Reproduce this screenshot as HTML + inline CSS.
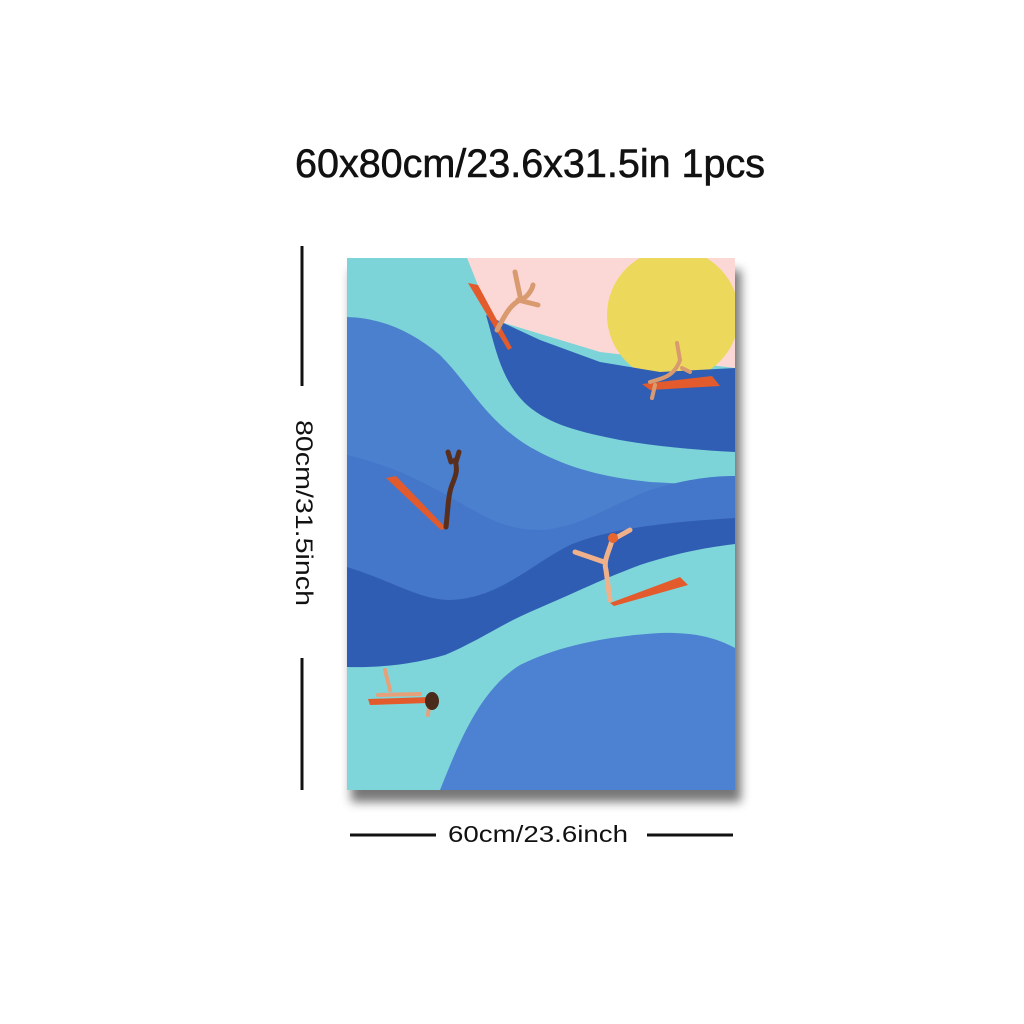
<!DOCTYPE html>
<html><head><meta charset="utf-8"><style>
html,body{margin:0;padding:0;background:#fff;width:1024px;height:1024px;overflow:hidden}
</style></head><body>
<svg width="1024" height="1024" viewBox="0 0 1024 1024" xmlns="http://www.w3.org/2000/svg">
<defs>
<filter id="sh" x="-10%" y="-10%" width="130%" height="130%"><feGaussianBlur stdDeviation="5"/></filter>
<clipPath id="cp"><rect x="347" y="258" width="388" height="532"/></clipPath>
</defs>
<text x="295" y="177" font-family="Liberation Sans, sans-serif" font-size="40" fill="#111" stroke="#111" stroke-width="0.6" textLength="470" lengthAdjust="spacingAndGlyphs">60x80cm/23.6x31.5in 1pcs</text>
<rect x="351" y="270" width="390" height="532" fill="#555" filter="url(#sh)" opacity="0.8"/>
<g clip-path="url(#cp)">
<rect x="347" y="258" width="388" height="532" fill="#7cd3d8"/>
<path d="M467 258 C478 285 484 300 488 318 L600 352 L735 368 L735 258 Z" fill="#fbd8d6"/>
<circle cx="673" cy="315" r="66" fill="#ecd85a"/>
<path d="M486 315 C495 345 500 380 527 405 C550 425 580 432 620 440 C660 447 700 450 735 452 L735 368 L660 372 L600 362 L540 340 Z" fill="#2f5eb4"/>
<path d="M347 317 C380 318 410 330 440 355 C470 385 485 420 530 447 C570 470 610 478 650 482 C690 484 715 486 735 488 L735 790 L347 790 Z" fill="#4b80cf"/>
<path d="M347 455 C390 465 420 480 450 497 C485 517 505 530 540 530 C580 528 610 505 650 490 C690 478 715 476 735 476 L735 790 L347 790 Z" fill="#4477c9"/>
<path d="M347 567 C390 580 420 600 450 600 C500 598 530 565 570 545 C610 528 670 522 735 518 L735 790 L347 790 Z" fill="#2f5db3"/>
<path d="M347 667 C390 668 420 662 445 655 C480 640 500 625 530 612 C570 595 600 580 640 565 C680 552 710 547 735 544 L735 790 L347 790 Z" fill="#7fd6da"/>
<path d="M440 790 C460 740 480 690 520 665 C560 645 610 636 660 633 C700 632 720 640 735 648 L735 790 Z" fill="#4c82d1"/>
<path d="M468 283 L478 285 L512 348 L508 350 Z" fill="#e35a2c"/>
<path d="M497 330 C505 315 510 305 520 300 C527 298 532 290 533 285 M518 300 L538 305 M520 296 L515 272" stroke="#d99a70" stroke-width="5" fill="none" stroke-linecap="round"/>
<path d="M642 384 L712 376 L720 386 L650 390 Z" fill="#e35a2c"/>
<path d="M650 382 C665 378 675 375 680 360 M680 360 L677 343 M682 368 L690 372 M655 385 L652 398" stroke="#d99a70" stroke-width="4" fill="none" stroke-linecap="round"/>
<path d="M386 478 L396 476 L446 528 L441 530 Z" fill="#e35a2c"/>
<path d="M446 527 C448 510 448 495 452 485 C456 475 458 470 455 460 M451 462 L448 452 M456 462 L459 452" stroke="#5a2e1c" stroke-width="5" fill="none" stroke-linecap="round"/>
<path d="M610 603 L680 577 L688 585 L614 606 Z" fill="#e35a2c"/>
<path d="M610 600 L606 570 C603 560 610 550 612 540 M604 562 L575 552 M612 540 L630 530" stroke="#f0b08a" stroke-width="5" fill="none" stroke-linecap="round"/>
<circle cx="613" cy="538" r="5" fill="#e8652e"/>
<path d="M368 699 L430 697 L428 703 L370 705 Z" fill="#e35a2c"/>
<path d="M378 695 L420 694 M390 690 L385 670 M430 697 L428 715" stroke="#e6a07a" stroke-width="4" fill="none" stroke-linecap="round"/>
<ellipse cx="432" cy="701" rx="7" ry="9" fill="#4a2a1a"/>
</g>
<line x1="302" y1="246" x2="302" y2="386" stroke="#111" stroke-width="3"/>
<line x1="302" y1="658" x2="302" y2="790" stroke="#111" stroke-width="3"/>
<text transform="translate(296,420) rotate(90)" font-family="Liberation Sans, sans-serif" font-size="24" fill="#111" textLength="186" lengthAdjust="spacingAndGlyphs">80cm/31.5inch</text>
<line x1="350" y1="835" x2="436" y2="835" stroke="#111" stroke-width="3"/>
<line x1="647" y1="835" x2="733" y2="835" stroke="#111" stroke-width="3"/>
<text x="448" y="842" font-family="Liberation Sans, sans-serif" font-size="23" fill="#111" textLength="180" lengthAdjust="spacingAndGlyphs">60cm/23.6inch</text>
</svg>
</body></html>
